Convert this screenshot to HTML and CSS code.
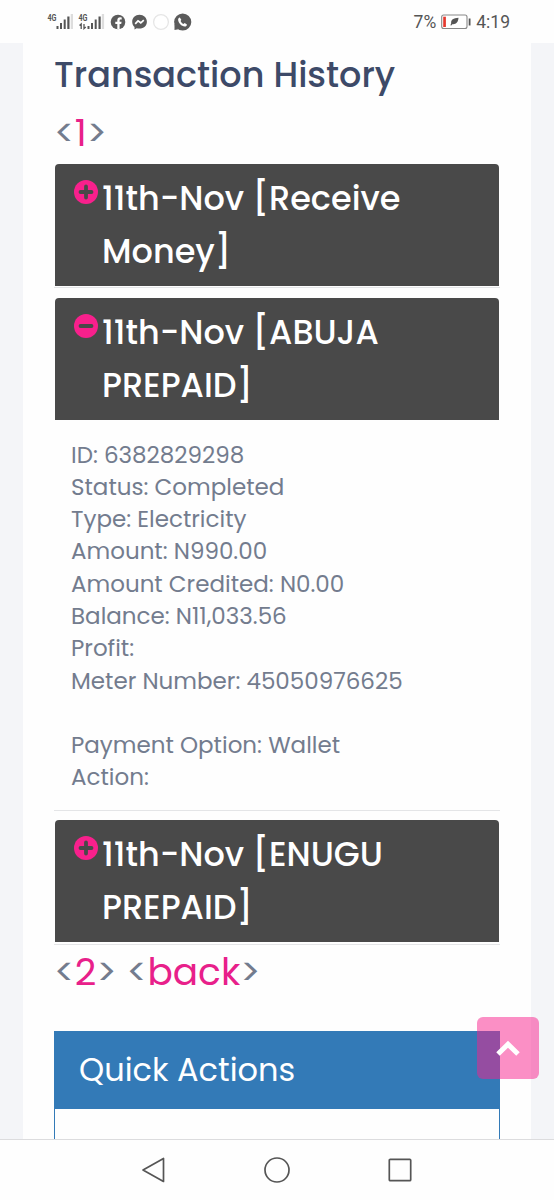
FILE: index.html
```html
<!DOCTYPE html>
<html lang="en">
<head>
<meta charset="utf-8">
<title>Transaction History</title>
<link rel="stylesheet" href="styles.css">
</head>
<body>
<div class="screen">
  <header class="status">
    <svg class="status-icons" width="150" height="30" viewBox="45 8 150 30">
      <g fill="#555" font-family="Roboto, sans-serif" font-size="8.5" font-weight="700">
        <text x="47.500" y="20.500" textLength="9" lengthAdjust="spacingAndGlyphs">4G</text>
        <text x="78.500" y="20.500" textLength="9" lengthAdjust="spacingAndGlyphs">4G</text>
      </g>
      <path fill="#555" d="M56.500 26h2v3h-2zM60 23h2v6h-2zM63.700 19.500h2v9.500h-2zM67.300 16.500h2.200v12.500h-2.200zM87.500 26h2v3h-2zM91 23h2v6h-2zM94.700 19.500h2v9.500h-2zM98.500 16.500h2.200v12.500h-2.200z"/>
      <path fill="#ddd" d="M70.700 14h2.300v15h-2.300zM101.800 14h2.300v15h-2.300z"/>
      <path fill="none" stroke="#555" stroke-width="1.300" d="M79.500 25.500l1.700-1.500v5M84 24v4.500l1.800-1.500"/>
      <circle cx="118" cy="22" r="7.300" fill="#5b5b5b"/>
      <path fill="#fff" d="M117.300 29.300v-5.300h-2v-2.200h2v-1.500c0-2 1.100-3 2.900-3l1.500.1v2h-1c-.9 0-1.100.5-1.100 1.100v1.300h2l-.4 2.200h-1.600v5.300z"/>
      <path fill="#5b5b5b" d="M139.500 14.800c-4.200 0-7.300 3-7.300 6.900 0 2.100.8 3.900 2.300 5.200v2.500l2.200-1.200c.9.300 1.800.4 2.800.4 4.200 0 7.400-3 7.400-6.900s-3.200-6.900-7.400-6.900z"/>
      <path fill="none" stroke="#fff" stroke-width="1.700" d="M135.200 23.800l2.800-3 2.800 2 3-2.600"/>
      <circle cx="161" cy="22" r="7.400" fill="#fff" stroke="#e6e6e6" stroke-width="1.300"/>
      <circle cx="182.700" cy="22" r="8.600" fill="#5b5b5b"/>
      <path fill="#5b5b5b" d="M174.500 24v6l4-.8z"/>
      <path fill="#fff" d="M179.800 17.500l1.500 2.300-.7 1.200c.6 1.400 1.500 2.300 2.800 2.900l1.300-.8 2.200 1.400c.2 1.100-1 2.100-2.100 2.100-3.500-.5-6.300-3.200-6.700-6.800 0-1 .7-2.100 1.700-2.300z"/>
    </svg>
    <div class="status-right">
      <span>7%</span>
      <svg width="30" height="16" viewBox="441 14 30 16">
        <rect x="441.700" y="15" width="25.300" height="13.500" rx="2" fill="#fff" stroke="#888" stroke-width="1.100"/>
        <path fill="#e5392f" d="M443.200 16.700h2.700v10.300h-2.700z"/>
        <path fill="#555" d="M458.500 17.800c-5 .3-7.800 2-7.300 5.500l-.8 2 .9.200.9-1.300c3.600.5 6-1.600 6.300-6.400z"/>
        <path fill="#555" d="M468.700 18.500h1.800v7h-1.800z"/>
      </svg>
      <span>4:19</span>
    </div>
  </header>

  <main class="page">
    <section class="card">
      <h1 class="title">Transaction History</h1>
      <nav class="pager pager-top">&lt;<a>1</a>&gt;</nav>

      <article class="entry">
        <h2 class="entry-head">
          <svg class="toggle" viewBox="0 0 24 24"><circle cx="12" cy="12" r="12"/><path d="M6.500 12h11M12 6.500v11"/></svg>
          <span>11th-Nov [Receive Money]</span>
        </h2>
      </article>

      <article class="entry entry-open">
        <h2 class="entry-head">
          <svg class="toggle" viewBox="0 0 24 24"><circle cx="12" cy="12" r="12"/><path d="M6.500 12h11"/></svg>
          <span>11th-Nov [ABUJA PREPAID]</span>
        </h2>
        <div class="details">
          <p>ID: 6382829298</p>
          <p>Status: Completed</p>
          <p>Type: Electricity</p>
          <p>Amount: N990.00</p>
          <p>Amount Credited: N0.00</p>
          <p>Balance: N11,033.56</p>
          <p>Profit:</p>
          <p>Meter Number: 45050976625</p>
          <p class="blank"></p>
          <p>Payment Option: Wallet</p>
          <p>Action:</p>
        </div>
      </article>

      <article class="entry entry-last">
        <h2 class="entry-head">
          <svg class="toggle" viewBox="0 0 24 24"><circle cx="12" cy="12" r="12"/><path d="M6.500 12h11M12 6.500v11"/></svg>
          <span>11th-Nov [ENUGU PREPAID]</span>
        </h2>
      </article>

      <nav class="pager">&lt;<a>2</a>&gt; &lt;<a>back</a>&gt;</nav>

      <section class="panel"><h3 class="panel-head">Quick Actions</h3></section>
    </section>
    <a class="to-top"><svg width="24" height="17" viewBox="0 0 24 17"><path d="M2 14L12 4.200 22 14"/></svg></a>
  </main>

  <footer class="navbar">
    <svg viewBox="0 0 26 26"><path d="M22.500 1.500v23L2 13z"/></svg>
    <svg viewBox="0 0 26 26"><circle cx="13" cy="13" r="12"/></svg>
    <svg viewBox="0 0 26 26"><rect x="2.300" y="2.300" width="21.400" height="21.400" rx="1"/></svg>
  </footer>
</div>
</body>
</html>
```
FILE: styles.css
```css
* { box-sizing: border-box; }
body { margin: 0; font-family: Poppins, Inter, sans-serif; color: #737c8e; background: #fefefe; }
h1, h2, h3, p { margin: 0; }
.screen { display: flex; flex-direction: column; width: 554px; height: 1200px; overflow: hidden; }

.status { display: flex; justify-content: space-between; height: 43px; padding: 8px 44px 0 45px; }
.status-right { display: flex; align-items: center; height: 28px; gap: 5px; font: 17.500px/28px Roboto, sans-serif; color: #555; }

.page { position: relative; flex: none; height: 1096px; padding: 0 23px; background: #f4f5f8; overflow: hidden; }
.card { height: 100%; padding: 0 31px 0 32px; background: #fefefe; }
.title { height: 62px; margin-left: -1px; font-size: 35px; line-height: 64px; font-weight: 500; white-space: nowrap; color: #3d4a68; }

.pager { height: 58px; margin-left: -1px; font-size: 37.500px; line-height: 54px; white-space: nowrap; }
.pager a { color: #e8208a; }
.pager-top { height: 59px; line-height: 57px; }

.entry { margin: 0 0 10px -1px; padding: 0 0 1px 1px; border-bottom: 1px solid #e4e5e7; }
.entry-open { margin-bottom: 9px; }
.entry-last { padding-bottom: 2px; margin-bottom: 0; }
.entry-head { display: flex; gap: 4px; height: 122px; margin-right: 1px; padding: 8px 60px 0 19px; border-radius: 4px 4px 0 0; background: #494949; color: #fff; font-size: 33.500px; line-height: 53px; font-weight: 500; }
.toggle { flex: none; width: 24px; height: 24px; margin-top: 8px; fill: #f8208c; stroke: #494949; stroke-width: 3.800px; stroke-linecap: round; }
.toggle circle { stroke: none; }

.details { height: 389px; padding: 18.500px 16px 0; font-size: 23px; line-height: 32.300px; white-space: nowrap; }
.blank { height: 32.300px; }

.panel { width: 446px; height: 160px; margin: 28px 0 0 -1px; border: 1.500px solid #337ab7; }
.panel-head { height: 77px; padding-left: 24px; background: #337ab7; color: #fff; font-size: 32px; line-height: 76px; font-weight: 400; }

.to-top { position: absolute; left: 477px; top: 974px; width: 62px; height: 62px; border-radius: 6px; background: rgba(248, 32, 140, 0.5); display: flex; align-items: center; justify-content: center; }
.to-top svg { fill: none; stroke: #fff; stroke-width: 5px; }

.navbar { display: flex; justify-content: center; align-items: center; gap: 97px; height: 61px; border-top: 1px solid #dcdcde; background: #fefefe; }
.navbar svg { width: 26px; height: 26px; fill: none; stroke: #555; stroke-width: 1.700px; stroke-linejoin: round; }
```
